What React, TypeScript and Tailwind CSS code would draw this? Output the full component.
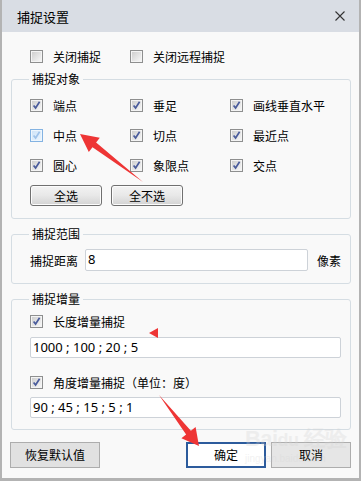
import React from "react";

function Box({ checked = false, hover = false }: { checked?: boolean; hover?: boolean }) {
  return (
    <span
      className={`w-[13px] h-[13px] shrink-0 border flex items-center justify-center ${
        hover ? "border-[#84b3e2] bg-[#eef6fd]" : "border-[#8e8f8f] bg-[#f4f4f4]"
      }`}
    >
      <span
        className={`w-[9px] h-[9px] flex items-center justify-center ${
          hover ? "bg-gradient-to-br from-[#cfe4f8] to-[#eaf4fd]" : "bg-gradient-to-br from-[#cfcfcf] to-[#f6f6f6]"
        }`}
      >
        {checked && (
          <svg width="9" height="9" viewBox="0 0 9 9">
            <path
              d="M1.6 4.4 L3.6 7 L7.6 0.8"
              fill="none"
              stroke={hover ? "#9fc3ea" : "#4a5c9c"}
              strokeWidth="1.7"
            />
          </svg>
        )}
      </span>
    </span>
  );
}

function Check({ label, checked = false, hover = false, w = "w-[100px]" }: { label: string; checked?: boolean; hover?: boolean; w?: string }) {
  return (
    <div className={`flex items-center gap-[10px] ${w}`}>
      <Box checked={checked} hover={hover} />
      <span className="leading-[17px] whitespace-nowrap">{label}</span>
    </div>
  );
}

function Group({ title, children, className }: { title: string; children: React.ReactNode; className?: string }) {
  return (
    <fieldset className={`ml-[9px] w-[340px] border border-[#d5dde3] rounded-[3px] ${className ?? ""}`}>
      <legend className="ml-[17px] px-[3px] leading-[16px] h-[16px]">{title}</legend>
      {children}
    </fieldset>
  );
}

function SmallBtn({ label }: { label: string }) {
  return (
    <div className="w-[72px] h-[21px] border border-[#707070] rounded-[3px] bg-gradient-to-b from-[#f3f3f3] via-[#e8e8e8] to-[#d3d3d3] flex items-center justify-center leading-none shadow-[inset_0_0_0_1px_#fcfcfc]">
      {label}
    </div>
  );
}

export default function App() {
  return (
    <div className="relative w-[361px] h-[481px] bg-[#f9f9f9] border-l-2 border-r-2 border-b-[3px] border-[#b3b3b3] flex flex-col text-[12px] text-black font-['Noto_Sans_CJK_SC','Noto_Sans',sans-serif] overflow-hidden">
      {/* Title bar */}
      <div className="h-[32px] shrink-0 bg-[#d9dde4] flex items-center justify-between pl-[15px] pr-[14px]">
        <span className="text-[13px] leading-none">捕捉设置</span>
        <svg width="10" height="10" viewBox="0 0 10 10">
          <path d="M0.5 0.5 L9.5 9.5 M9.5 0.5 L0.5 9.5" stroke="#333" strokeWidth="1.1" />
        </svg>
      </div>

      {/* Top row */}
      <div className="mt-[16px] h-[17px] pl-[28px] flex items-center">
        <Check label="关闭捕捉" />
        <Check label="关闭远程捕捉" />
      </div>

      {/* 捕捉对象 */}
      <Group title="捕捉对象" className="mt-[6px]">
        <div className="pt-[3px] pl-[18px] pb-[12px]">
          <div className="grid grid-cols-[100px_100px_100px] auto-rows-[30px] items-center">
            <Check label="端点" checked />
            <Check label="垂足" checked />
            <Check label="画线垂直水平" checked />
            <Check label="中点" checked hover />
            <Check label="切点" checked />
            <Check label="最近点" checked />
            <Check label="圆心" checked />
            <Check label="象限点" checked />
            <Check label="交点" checked />
          </div>
          <div className="mt-[5px] flex gap-[9px]">
            <SmallBtn label="全选" />
            <SmallBtn label="全不选" />
          </div>
        </div>
      </Group>

      {/* 捕捉范围 */}
      <Group title="捕捉范围" className="mt-[7px]">
        <div className="pt-[7px] pb-[12px] pl-[18px] pr-[9px] flex items-center">
          <span className="w-[55px] leading-[17px]">捕捉距离</span>
          <div className="flex-1 h-[22px] bg-white border border-[#cdd2d8] rounded-[2px] flex items-center pl-[2px] text-[13px] font-['Noto_Sans',sans-serif]">
            8
          </div>
          <span className="ml-[9px] leading-[17px]">像素</span>
        </div>
      </Group>

      {/* 捕捉增量 */}
      <Group title="捕捉增量" className="mt-[7px]">
        <div className="pt-[6px] pb-[11px] pl-[18px] pr-[9px] flex flex-col">
          <div className="h-[17px] flex items-center">
            <Check label="长度增量捕捉" checked w="w-auto" />
          </div>
          <div className="mt-[7px] h-[21px] bg-white border border-[#cdd2d8] rounded-[2px] flex items-center pl-[2px] text-[13px] whitespace-pre font-['Noto_Sans',sans-serif]">
            1000 ; 100 ; 20 ; 5
          </div>
          <div className="mt-[16px] h-[17px] flex items-center">
            <Check label="角度增量捕捉（单位：度）" checked w="w-auto" />
          </div>
          <div className="mt-[6px] h-[21px] bg-white border border-[#cdd2d8] rounded-[2px] flex items-center pl-[2px] text-[13px] whitespace-pre font-['Noto_Sans',sans-serif]">
            90 ; 45 ; 15 ; 5 ; 1
          </div>
        </div>
      </Group>

      {/* Bottom buttons */}
      <div className="mt-[12px] h-[26px] flex pl-[8px] pr-[8px]">
        <div className="w-[90px] h-[26px] bg-[#e1e1e1] border border-[#adadad] flex items-center justify-center">恢复默认值</div>
        <div className="ml-auto w-[80px] h-[26px] bg-white border-2 border-[#2c5b9c] flex items-center justify-center">确定</div>
        <div className="ml-[5px] w-[80px] h-[26px] bg-[#e6e6e6] border border-[#adadad] flex items-center justify-center">取消</div>
      </div>

      {/* Watermark */}
      <div className="absolute left-[243px] top-[428px] pointer-events-none opacity-30 text-[#d4d4d4] flex flex-col leading-none">
        <span className="text-[22px] font-bold font-['Liberation_Sans',sans-serif] tracking-tight">Bai<span className="text-[18px]">du</span> 经验</span>
        <span className="text-[10px] mt-[4px] font-['Liberation_Sans',sans-serif]">jingyan.baidu.com</span>
      </div>

      {/* Annotation arrows */}
      <svg className="absolute left-0 top-0 pointer-events-none" width="361" height="481" viewBox="0 0 361 481">
        <polygon points="78,134 97.8,137.7 94.1,142.5 141,182 90.5,147.3 86.8,152.1" fill="#ee3535" />
        <polygon points="147,333 156,328 156,338" fill="#ee3535" />
        <polygon points="197,446 179.4,438.2 184.1,434.5 157,395 188.9,430.7 193.6,427.1" fill="#ee3535" />
      </svg>
    </div>
  );
}
